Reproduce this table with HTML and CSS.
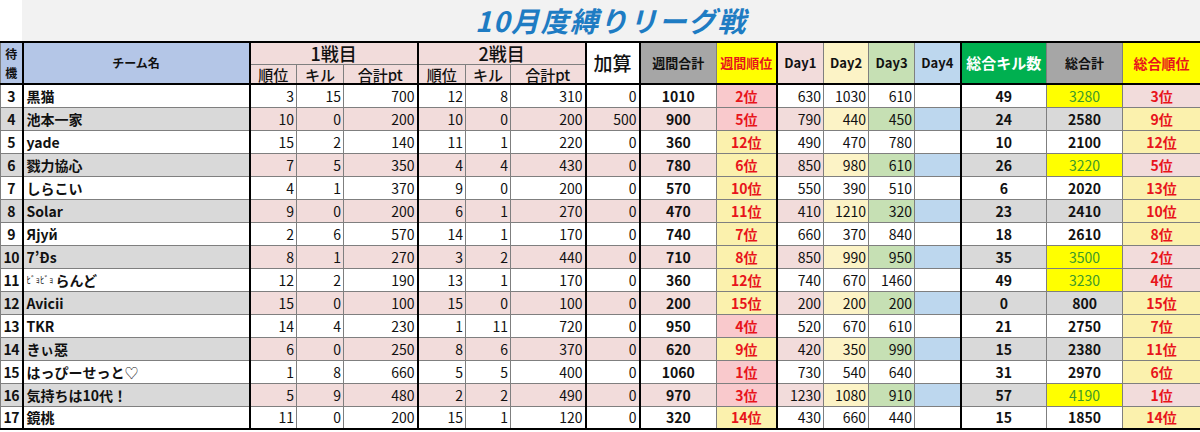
FILE: index.html
```html
<!DOCTYPE html>
<html lang="ja">
<head>
<meta charset="utf-8">
<title>10月度縛りリーグ戦</title>
<link rel="stylesheet" href="styles.css">
</head>
<body>
<div class="title-row">
  <div class="title-gap"></div>
  <div class="title">10月度縛りリーグ戦</div>
</div>
<table class="board">
  <colgroup>
    <col style="width:22px"><col style="width:227px">
    <col style="width:47px"><col style="width:47px"><col style="width:74px">
    <col style="width:48px"><col style="width:45px"><col style="width:75px">
    <col style="width:54px"><col style="width:77px"><col style="width:60px">
    <col style="width:47px"><col style="width:45px"><col style="width:46px"><col style="width:46px">
    <col style="width:86px"><col style="width:76px"><col style="width:78px">
  </colgroup>
  <thead>
    <tr class="h1">
      <th rowspan="2" class="h-no">待<br>機</th>
      <th rowspan="2" class="h-name sep">チーム名</th>
      <th colspan="3" class="h-battle sep">1戦目</th>
      <th colspan="3" class="h-battle sep">2戦目</th>
      <th rowspan="2" class="h-add sep">加算</th>
      <th rowspan="2" class="h-gray sep">週間合計</th>
      <th rowspan="2" class="h-yel">週間順位</th>
      <th rowspan="2" class="h-day h-d1 sep">Day1</th>
      <th rowspan="2" class="h-day h-d2">Day2</th>
      <th rowspan="2" class="h-day h-d3">Day3</th>
      <th rowspan="2" class="h-day h-d4">Day4</th>
      <th rowspan="2" class="h-kill sep">総合キル数</th>
      <th rowspan="2" class="h-gray">総合計</th>
      <th rowspan="2" class="h-yel h-big">総合順位</th>
    </tr>
    <tr class="h2">
      <th class="h-sub sep">順位</th><th class="h-sub">キル</th><th class="h-sub">合計pt</th>
      <th class="h-sub sep">順位</th><th class="h-sub">キル</th><th class="h-sub">合計pt</th>
    </tr>
  </thead>
  <tbody>
    <tr class="odd"><td class="no">3</td><td class="name sep">黒猫</td><td class="bt sep">3</td><td class="bt">15</td><td class="bt">700</td><td class="bt sep">12</td><td class="bt">8</td><td class="bt">310</td><td class="bt sep">0</td><td class="wt sep">1010</td><td class="rk pk">2位</td><td class="d d1 sep">630</td><td class="d d2">1030</td><td class="d d3">610</td><td class="d d4"></td><td class="kl sep">49</td><td class="tt hi">3280</td><td class="rk tpk">3位</td></tr>
    <tr class="even"><td class="no">4</td><td class="name sep">池本一家</td><td class="bt sep">10</td><td class="bt">0</td><td class="bt">200</td><td class="bt sep">10</td><td class="bt">0</td><td class="bt">200</td><td class="bt sep">500</td><td class="wt sep">900</td><td class="rk pk">5位</td><td class="d d1 sep">790</td><td class="d d2">440</td><td class="d d3">450</td><td class="d d4"></td><td class="kl sep">24</td><td class="tt">2580</td><td class="rk yl">9位</td></tr>
    <tr class="odd"><td class="no">5</td><td class="name sep">yade</td><td class="bt sep">15</td><td class="bt">2</td><td class="bt">140</td><td class="bt sep">11</td><td class="bt">1</td><td class="bt">220</td><td class="bt sep">0</td><td class="wt sep">360</td><td class="rk yl">12位</td><td class="d d1 sep">490</td><td class="d d2">470</td><td class="d d3">780</td><td class="d d4"></td><td class="kl sep">10</td><td class="tt">2100</td><td class="rk yl">12位</td></tr>
    <tr class="even"><td class="no">6</td><td class="name sep">戮力協心</td><td class="bt sep">7</td><td class="bt">5</td><td class="bt">350</td><td class="bt sep">4</td><td class="bt">4</td><td class="bt">430</td><td class="bt sep">0</td><td class="wt sep">780</td><td class="rk yl">6位</td><td class="d d1 sep">850</td><td class="d d2">980</td><td class="d d3">610</td><td class="d d4"></td><td class="kl sep">26</td><td class="tt hi">3220</td><td class="rk tpk">5位</td></tr>
    <tr class="odd"><td class="no">7</td><td class="name sep">しらこい</td><td class="bt sep">4</td><td class="bt">1</td><td class="bt">370</td><td class="bt sep">9</td><td class="bt">0</td><td class="bt">200</td><td class="bt sep">0</td><td class="wt sep">570</td><td class="rk yl">10位</td><td class="d d1 sep">550</td><td class="d d2">390</td><td class="d d3">510</td><td class="d d4"></td><td class="kl sep">6</td><td class="tt">2020</td><td class="rk yl">13位</td></tr>
    <tr class="even"><td class="no">8</td><td class="name sep">Solar</td><td class="bt sep">9</td><td class="bt">0</td><td class="bt">200</td><td class="bt sep">6</td><td class="bt">1</td><td class="bt">270</td><td class="bt sep">0</td><td class="wt sep">470</td><td class="rk yl">11位</td><td class="d d1 sep">410</td><td class="d d2">1210</td><td class="d d3">320</td><td class="d d4"></td><td class="kl sep">23</td><td class="tt">2410</td><td class="rk yl">10位</td></tr>
    <tr class="odd"><td class="no">9</td><td class="name sep">Яjyй</td><td class="bt sep">2</td><td class="bt">6</td><td class="bt">570</td><td class="bt sep">14</td><td class="bt">1</td><td class="bt">170</td><td class="bt sep">0</td><td class="wt sep">740</td><td class="rk yl">7位</td><td class="d d1 sep">660</td><td class="d d2">370</td><td class="d d3">840</td><td class="d d4"></td><td class="kl sep">18</td><td class="tt">2610</td><td class="rk yl">8位</td></tr>
    <tr class="even"><td class="no">10</td><td class="name sep">7’Ðs</td><td class="bt sep">8</td><td class="bt">1</td><td class="bt">270</td><td class="bt sep">3</td><td class="bt">2</td><td class="bt">440</td><td class="bt sep">0</td><td class="wt sep">710</td><td class="rk yl">8位</td><td class="d d1 sep">850</td><td class="d d2">990</td><td class="d d3">950</td><td class="d d4"></td><td class="kl sep">35</td><td class="tt hi">3500</td><td class="rk tpk">2位</td></tr>
    <tr class="odd"><td class="no">11</td><td class="name sep"><span class="tiny">ﾋﾞｮﾋﾞｮ</span>らんど</td><td class="bt sep">12</td><td class="bt">2</td><td class="bt">190</td><td class="bt sep">13</td><td class="bt">1</td><td class="bt">170</td><td class="bt sep">0</td><td class="wt sep">360</td><td class="rk yl">12位</td><td class="d d1 sep">740</td><td class="d d2">670</td><td class="d d3">1460</td><td class="d d4"></td><td class="kl sep">49</td><td class="tt hi">3230</td><td class="rk tpk">4位</td></tr>
    <tr class="even"><td class="no">12</td><td class="name sep">Avicii</td><td class="bt sep">15</td><td class="bt">0</td><td class="bt">100</td><td class="bt sep">15</td><td class="bt">0</td><td class="bt">100</td><td class="bt sep">0</td><td class="wt sep">200</td><td class="rk yl">15位</td><td class="d d1 sep">200</td><td class="d d2">200</td><td class="d d3">200</td><td class="d d4"></td><td class="kl sep">0</td><td class="tt">800</td><td class="rk yl">15位</td></tr>
    <tr class="odd"><td class="no">13</td><td class="name sep">TKR</td><td class="bt sep">14</td><td class="bt">4</td><td class="bt">230</td><td class="bt sep">1</td><td class="bt">11</td><td class="bt">720</td><td class="bt sep">0</td><td class="wt sep">950</td><td class="rk pk">4位</td><td class="d d1 sep">520</td><td class="d d2">670</td><td class="d d3">610</td><td class="d d4"></td><td class="kl sep">21</td><td class="tt">2750</td><td class="rk yl">7位</td></tr>
    <tr class="even"><td class="no">14</td><td class="name sep">きぃ惡</td><td class="bt sep">6</td><td class="bt">0</td><td class="bt">250</td><td class="bt sep">8</td><td class="bt">6</td><td class="bt">370</td><td class="bt sep">0</td><td class="wt sep">620</td><td class="rk yl">9位</td><td class="d d1 sep">420</td><td class="d d2">350</td><td class="d d3">990</td><td class="d d4"></td><td class="kl sep">15</td><td class="tt">2380</td><td class="rk yl">11位</td></tr>
    <tr class="odd"><td class="no">15</td><td class="name sep">はっぴーせっと<span class="heart">♡</span></td><td class="bt sep">1</td><td class="bt">8</td><td class="bt">660</td><td class="bt sep">5</td><td class="bt">5</td><td class="bt">400</td><td class="bt sep">0</td><td class="wt sep">1060</td><td class="rk pk">1位</td><td class="d d1 sep">730</td><td class="d d2">540</td><td class="d d3">640</td><td class="d d4"></td><td class="kl sep">31</td><td class="tt">2970</td><td class="rk yl">6位</td></tr>
    <tr class="even"><td class="no">16</td><td class="name sep">気持ちは10代！</td><td class="bt sep">5</td><td class="bt">9</td><td class="bt">480</td><td class="bt sep">2</td><td class="bt">2</td><td class="bt">490</td><td class="bt sep">0</td><td class="wt sep">970</td><td class="rk pk">3位</td><td class="d d1 sep">1230</td><td class="d d2">1080</td><td class="d d3">910</td><td class="d d4"></td><td class="kl sep">57</td><td class="tt hi">4190</td><td class="rk tpk">1位</td></tr>
    <tr class="odd last"><td class="no">17</td><td class="name sep">鏡桃</td><td class="bt sep">11</td><td class="bt">0</td><td class="bt">200</td><td class="bt sep">15</td><td class="bt">1</td><td class="bt">120</td><td class="bt sep">0</td><td class="wt sep">320</td><td class="rk yl">14位</td><td class="d d1 sep">430</td><td class="d d2">660</td><td class="d d3">440</td><td class="d d4"></td><td class="kl sep">15</td><td class="tt">1850</td><td class="rk yl">14位</td></tr>
  </tbody>
</table>
</body>
</html>
```
FILE: styles.css
```css
html, body {
  margin: 0;
  padding: 0;
  background: #ffffff;
}
body {
  font-family: "Noto Sans CJK JP", "Noto Sans", sans-serif;
  color: #111;
}
.title-row {
  display: flex;
  height: 41px;
}
.title-gap {
  width: 22px;
  flex: none;
}
.title {
  flex: 1;
  background: #f2f2f2;
  display: flex;
  align-items: center;
  justify-content: center;
  font-size: 28px;
  line-height: 34px;
  font-weight: bold;
  font-style: italic;
  color: #1e7cc3;
  letter-spacing: 1.5px;
  padding-bottom: 1px;
}
.board {
  border-collapse: collapse;
  table-layout: fixed;
  width: 1200px;
}
.board th, .board td {
  border: 1px solid #7f7f7f;
  padding: 0 3px;
  white-space: nowrap;
  line-height: 16px;
}
.board td { overflow: hidden; }
.board .sep {
  border-left: 2px solid #000;
}
.board thead tr.h1 th {
  border-top: 2px solid #000;
}
.board thead th[rowspan], .board thead tr.h2 th {
  border-bottom: 2px solid #000;
}
.h1 { height: 22px; }
.h2 { height: 20px; }
.board th {
  font-weight: bold;
  text-align: center;
  font-size: 13px;
  padding: 0 1px;
}
.board th.h-no {
  background: #b4c6e7;
  font-size: 12px;
  line-height: 19px;
  padding: 0;
}
.board th.h-name {
  background: #b4c6e7;
  font-size: 12px;
}
.board th.h-battle {
  background: #f2dcdb;
  font-size: 18px;
  font-weight: 500;
  line-height: 17px;
  padding-top: 2px;
  padding-bottom: 1px;
}
.board th.h-sub {
  background: #f2dcdb;
  font-size: 15px;
  font-weight: 500;
  line-height: 16px;
  padding-top: 2px;
}
.board th.h-add {
  background: #fff;
  font-size: 19px;
  font-weight: 500;
}
.board th.h-gray { background: #a6a6a6; font-size: 13px; }
.board th.h-yel { background: #ffff00; color: #e8141b; font-size: 13px; }
.board th.h-big { font-size: 14px; }
.board th.h-day { font-size: 13px; }
.board th.h-d1 { background: #f2dcdb; }
.board th.h-d2 { background: #fcf3c6; }
.board th.h-d3 { background: #c6e0b4; }
.board th.h-d4 { background: #bdd7ee; }
.board th.h-kill { background: #00b050; color: #fff; font-size: 15px; }

tbody tr { height: 23px; }
.board td { font-size: 14px; }
.board td.no {
  text-align: center;
  font-weight: bold;
  padding: 0;
  letter-spacing: -0.5px;
}
.board td.name {
  font-weight: bold;
  text-align: left;
  padding-left: 3px;
}
.tiny {
  font-size: 9px;
  vertical-align: 3px;
  font-weight: normal;
  margin-right: 2px;
}
.heart { font-weight: normal; color: #333; }
.board td.bt, .board td.d { text-align: right; padding-right: 2px; }
.board td.wt, .board td.kl, .board td.tt { text-align: center; font-weight: bold; }
.board td.rk { text-align: center; font-weight: bold; color: #e8141b; }
.board td.pk { background: #f9c9cc; }
.board td.tpk { background: #f2dcdb; }
.board td.yl { background: #fbf1ad; }
.board td.kl { border-left-width: 2px; }

tr.even td.no, tr.even td.name, tr.even td.kl, tr.even td.tt { background: #d9d9d9; }
tr.even td.bt, tr.even td.wt, tr.even td.d1 { background: #f2dcdb; }
tr.even td.d2 { background: #fcf3c6; }
tr.even td.d3 { background: #c6e0b4; }
tr.even td.d4 { background: #bdd7ee; }
.board td.tt.hi, tr.even td.tt.hi { background: #ffff00; color: #3d9a2a; font-weight: normal; }
tr.last td { border-bottom: 2px solid #000; }
```
